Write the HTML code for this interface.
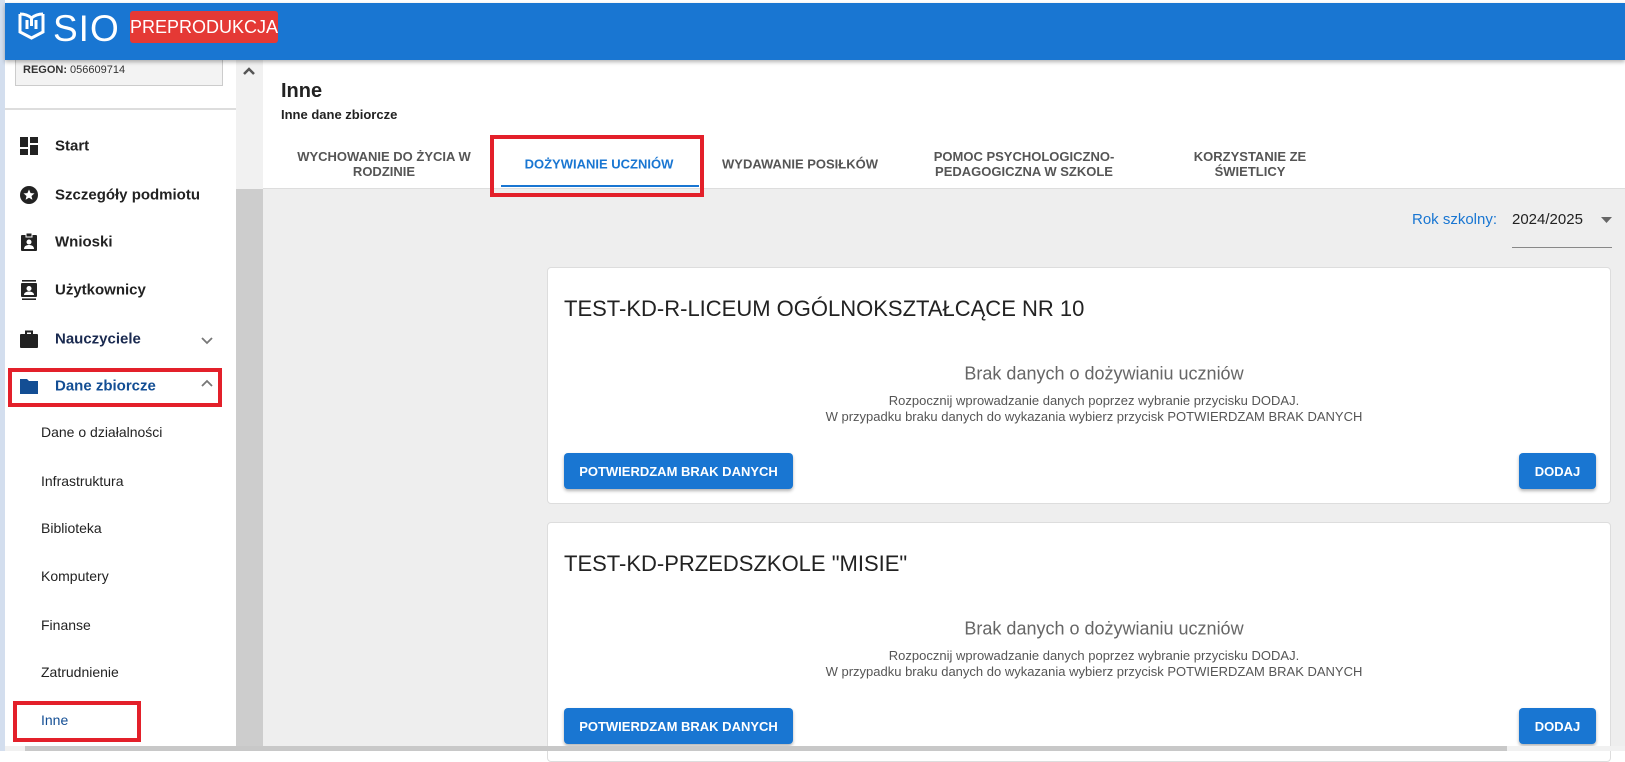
<!DOCTYPE html>
<html><head><meta charset="utf-8"><style>
*{box-sizing:border-box;margin:0;padding:0}
body{width:1625px;height:751px;overflow:hidden;position:relative;background:#fff;font-family:"Liberation Sans",Arial,sans-serif;color:#222}
.abs{position:absolute}
.hdr{left:5px;top:3px;width:1620px;height:57px;background:#1976d2;box-shadow:0 2px 4px rgba(0,0,0,.3);z-index:5}
.strip{left:0;top:0;width:5px;height:751px;background:#d3deee}
.side{left:5px;top:60px;width:231px;height:691px;background:#fff}
.item{position:absolute;left:55px;font-size:15px;font-weight:bold;color:#222;transform:translateY(-50%)}
.ico{position:absolute;left:19px;width:20px;height:20px;transform:translateY(-50%)}
.sub{position:absolute;left:41px;font-size:14px;color:#222;transform:translateY(-50%)}
.main{left:263px;top:60px;width:1362px;height:691px;background:#eee}
.tab{position:absolute;top:164px;transform:translate(-50%,-50%);font-size:13px;font-weight:bold;color:#555;text-align:center;line-height:15px;text-transform:uppercase}
.card{position:absolute;left:547px;width:1064px;background:#fff;border:1px solid #ddd;border-radius:4px}
.ct{position:absolute;left:16px;font-size:22px;color:#222;transform:translateY(-50%)}
.bd{position:absolute;left:0;width:100%;text-align:center;font-size:18px;color:#666;transform:translateY(-50%);padding-left:50px}
.ln{position:absolute;left:0;width:100%;text-align:center;font-size:13px;color:#555;line-height:16px;padding-left:30px}
.btn{position:absolute;height:36px;background:#1976d2;color:#fff;font-size:13px;font-weight:bold;border-radius:4px;box-shadow:0 2px 3px rgba(0,0,0,.3);display:flex;align-items:center;justify-content:center}
.red{position:absolute;border:4px solid #e3202a}
</style></head><body>
<div class="abs strip"></div>
<div class="abs hdr">
 <svg class="abs" style="left:13px;top:9px" width="27" height="28" viewBox="0 0 27 28"><path d="M2 2 V20 L13.5 26 L25 20 V2 M2 2 C6 2 10 3 13.5 6 C17 3 21 2 25 2 M13.5 6 V14 M9 8 V17 M18 8 V17" fill="none" stroke="#fff" stroke-width="3"/></svg>
 <div class="abs" style="left:48px;top:5px;font-size:37px;color:#fff;letter-spacing:1px">SIO</div>
 <div class="abs" style="left:125px;top:8px;width:148px;height:32px;background:#e53935;border-radius:3px;color:#fff;font-size:18px;line-height:32px;text-align:center">PREPRODUKCJA</div>
</div>
<div class="abs side">
 <div class="abs" style="left:10px;top:-10px;width:208px;height:36px;border:1px solid #ccc;background:#f3f3f3"></div>
 <div class="abs" style="left:18px;top:4px;font-size:11px;color:#333"><b>REGON:</b> 056609714</div>
 <div class="abs" style="left:0;top:48px;width:231px;height:2px;background:#ddd"></div>
</div>
<svg class="ico" style="top:146px" viewBox="0 0 20 20"><rect x="1" y="1" width="8" height="10" fill="#222"/><rect x="11" y="1" width="8" height="6" fill="#222"/><rect x="1" y="13" width="8" height="6" fill="#222"/><rect x="11" y="9" width="8" height="10" fill="#222"/></svg>
<div class="item" style="top:146px">Start</div>
<svg class="ico" style="top:195px" viewBox="0 0 20 20"><circle cx="10" cy="10" r="9" fill="#222"/><path d="M10 4.5l1.6 3.6 3.9.3-3 2.6.9 3.8L10 12.8 6.6 14.8l.9-3.8-3-2.6 3.9-.3z" fill="#fff"/></svg>
<div class="item" style="top:195px">Szczegóły podmiotu</div>
<svg class="ico" style="top:242px" viewBox="0 0 20 20"><rect x="2" y="3" width="16" height="16" rx="1" fill="#222"/><rect x="7" y="1" width="6" height="4" fill="#222" stroke="#fff" stroke-width="1"/><circle cx="10" cy="10" r="2.5" fill="#fff"/><path d="M5 17c0-3 2.5-4 5-4s5 1 5 4z" fill="#fff"/></svg>
<div class="item" style="top:242px">Wnioski</div>
<svg class="ico" style="top:290px" viewBox="0 0 20 20"><rect x="3" y="0" width="14" height="1.6" fill="#222"/><rect x="3" y="18.4" width="14" height="1.6" fill="#222"/><rect x="2" y="3" width="16" height="14" rx="1" fill="#222"/><circle cx="10" cy="8.5" r="2.5" fill="#fff"/><path d="M5 15c0-2.5 2.5-3.5 5-3.5s5 1 5 3.5z" fill="#fff"/></svg>
<div class="item" style="top:290px">Użytkownicy</div>
<svg class="ico" style="top:339px" viewBox="0 0 20 20"><rect x="1" y="5" width="18" height="14" rx="1" fill="#222"/><path d="M7 5V2.5h6V5" fill="none" stroke="#222" stroke-width="2"/></svg>
<div class="item" style="top:339px;color:#1a2a50">Nauczyciele</div>
<svg class="abs" style="left:200px;top:336px" width="14" height="10" viewBox="0 0 14 10"><path d="M2 2l5 5 5-5" fill="none" stroke="#777" stroke-width="1.8"/></svg>
<svg class="ico" style="top:386px" viewBox="0 0 20 20"><path d="M1 3h7l2 2h9v13H1z" fill="#134e94"/></svg>
<div class="item" style="top:386px;color:#134e94">Dane zbiorcze</div>
<svg class="abs" style="left:200px;top:378px" width="14" height="10" viewBox="0 0 14 10"><path d="M2 8l5-5 5 5" fill="none" stroke="#777" stroke-width="1.8"/></svg>
<div class="red" style="left:8px;top:368px;width:214px;height:39px"></div>
<div class="sub" style="top:432px">Dane o działalności</div>
<div class="sub" style="top:481px">Infrastruktura</div>
<div class="sub" style="top:528px">Biblioteka</div>
<div class="sub" style="top:576px">Komputery</div>
<div class="sub" style="top:625px">Finanse</div>
<div class="sub" style="top:672px">Zatrudnienie</div>
<div class="sub" style="top:720px;color:#134e94">Inne</div>
<div class="red" style="left:13px;top:701px;width:128px;height:41px"></div>
<div class="abs" style="left:236px;top:60px;width:27px;height:691px;background:#cdcdcd"></div>
<div class="abs" style="left:236px;top:60px;width:27px;height:129px;background:#f1f1f1"></div>
<svg class="abs" style="left:242px;top:66px" width="14" height="10" viewBox="0 0 14 10"><path d="M2 8l5-5 5 5" fill="none" stroke="#555" stroke-width="2.5"/></svg>
<div class="abs main"></div>
<div class="abs" style="left:263px;top:60px;width:1362px;height:129px;background:#fff;border-bottom:1px solid #ddd"></div>
<div class="abs" style="left:281px;top:80px;font-size:20px;font-weight:bold;color:#222">Inne</div>
<div class="abs" style="left:281px;top:107px;font-size:13px;font-weight:bold;color:#222">Inne dane zbiorcze</div>
<div class="tab" style="left:384px">Wychowanie do życia w<br>rodzinie</div>
<div class="tab" style="left:599px;color:#1976d2">Dożywianie uczniów</div>
<div class="abs" style="left:501px;top:185px;width:198px;height:2px;background:#1976d2"></div>
<div class="red" style="left:490px;top:135px;width:214px;height:62px"></div>
<div class="tab" style="left:800px">Wydawanie posiłków</div>
<div class="tab" style="left:1024px">Pomoc psychologiczno-<br>pedagogiczna w szkole</div>
<div class="tab" style="left:1250px">Korzystanie ze<br>świetlicy</div>
<div class="abs" style="left:1412px;top:211px;font-size:15px;color:#1976d2">Rok szkolny:</div>
<div class="abs" style="left:1512px;top:211px;font-size:15px;color:#222">2024/2025</div>
<svg class="abs" style="left:1601px;top:217px" width="11" height="6" viewBox="0 0 11 6"><path d="M0 0h11L5.5 6z" fill="#666"/></svg>
<div class="abs" style="left:1512px;top:247px;width:100px;height:1px;background:#888"></div>

<div class="card" style="top:267px;height:237px">
 <div class="ct" style="top:41px">TEST-KD-R-LICEUM OGÓLNOKSZTAŁCĄCE NR 10</div>
 <div class="bd" style="top:106px">Brak danych o dożywianiu uczniów</div>
 <div class="ln" style="top:125px">Rozpocznij wprowadzanie danych poprzez wybranie przycisku DODAJ.<br>W przypadku braku danych do wykazania wybierz przycisk POTWIERDZAM BRAK DANYCH</div>
 <div class="btn" style="left:16px;top:185px;width:229px">POTWIERDZAM BRAK DANYCH</div>
 <div class="btn" style="left:971px;top:185px;width:77px">DODAJ</div>
</div>
<div class="card" style="top:522px;height:240px">
 <div class="ct" style="top:41px">TEST-KD-PRZEDSZKOLE "MISIE"</div>
 <div class="bd" style="top:106px">Brak danych o dożywianiu uczniów</div>
 <div class="ln" style="top:125px">Rozpocznij wprowadzanie danych poprzez wybranie przycisku DODAJ.<br>W przypadku braku danych do wykazania wybierz przycisk POTWIERDZAM BRAK DANYCH</div>
 <div class="btn" style="left:16px;top:185px;width:229px">POTWIERDZAM BRAK DANYCH</div>
 <div class="btn" style="left:971px;top:185px;width:77px">DODAJ</div>
</div>
<div class="abs" style="left:5px;top:746px;width:1620px;height:5px;background:#f1f1f1"></div>
<div class="abs" style="left:25px;top:746px;width:1482px;height:5px;background:#c8c8c8"></div>
</body></html>
